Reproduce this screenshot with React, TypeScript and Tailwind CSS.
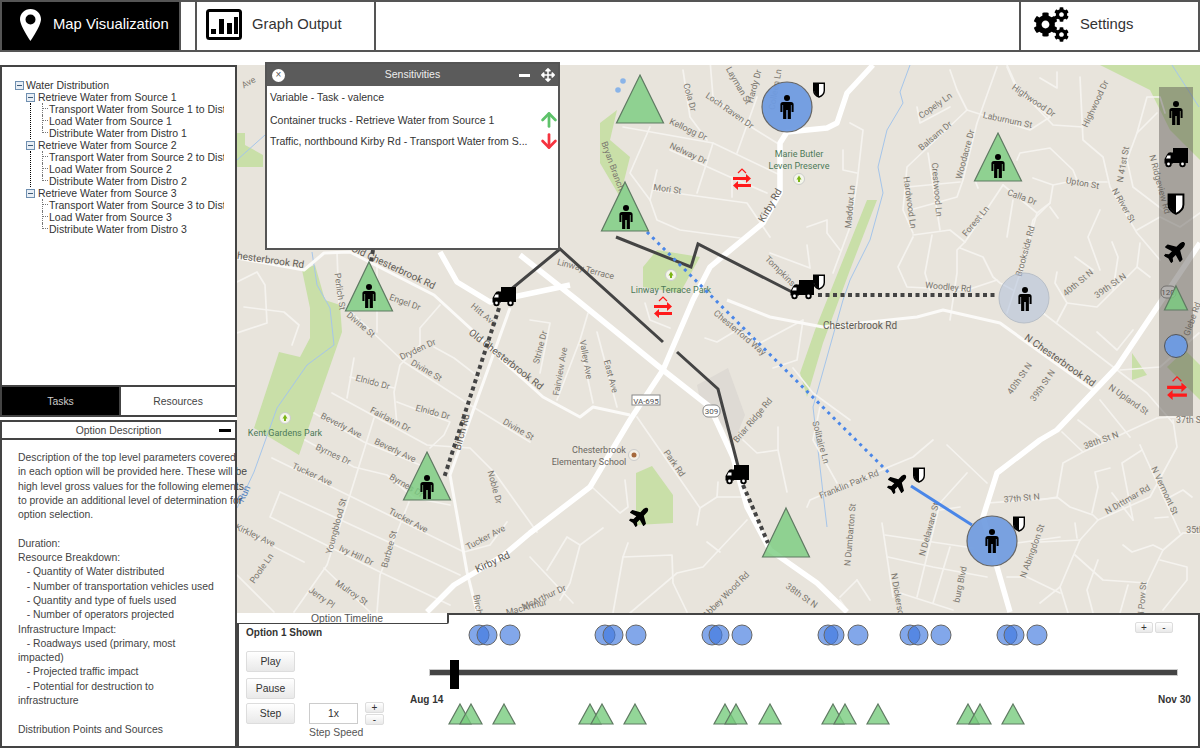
import { ArrowDown, ArrowUp } from "lucide-react";
import { FaArrowsAlt, FaCog, FaPlane } from "react-icons/fa";

// page coordinates, the map svg uses a viewBox that starts at the map's corner
const bigRoads = [
  "873,65 847,93 837,123 827,128 787,132 780,143 780,193 763,223 710,267 693,300 663,370 630,420 590,487 530,533 504,555 454,585 427,612",
  "520,255 577,300 663,370 710,407 733,457 747,507 770,550 817,583 847,612",
  "440,252 457,282 490,302 537,292 570,285",
  "1200,243 1117,367 1057,430 1040,440 997,473 983,517 997,567 1010,612",
];

const midRoads = [
  "237,258 304,270 324,253 350,252 434,295 470,328 504,362 543,397 580,417 593,407 630,415",
  "510,308 450,475 467,572 477,612",
  "727,300 770,317 823,327 917,317 943,310 1000,323 1093,390",
];

const thinRoads = [
  "347,308 404,362 470,405 530,442", "314,413 364,442 420,465", "332,393 427,445 470,448 494,472 537,532",
  "305,440 354,467 387,475 414,498 450,505", "272,458 354,498 464,552 490,545 507,522", "280,492 270,517 380,572 450,605",
  "280,492 460,575", "374,418 350,495 327,565 294,612", "409,502 380,575 377,612", "440,305 420,328 420,345 400,365 394,392 397,425",
  "434,347 454,358 480,378", "350,377 394,388", "354,358 347,398", "397,402 450,422 444,435 430,448", "244,307 284,312 299,325 292,345",
  "237,333 267,323 265,285 257,272 237,282", "237,528 304,562", "237,575 274,612", "324,568 370,612", "337,252 339,305", "377,255 377,332",
  "588,313 580,340 557,400", "580,343 593,403", "597,332 617,407", "530,320 550,323 540,373", "637,417 700,508 697,525", "700,508 717,497 743,497",
  "718,482 717,497", "592,487 620,513 628,507 625,480", "530,557 573,603", "547,570 567,537 580,545 603,528", "580,545 570,583 560,600",
  "628,543 623,557 672,555 673,583 687,612", "613,613 623,557", "630,613 677,573 703,567 747,520", "707,542 720,552", "743,440 757,453 778,450 787,492",
  "778,450 778,427", "807,507 810,500 850,483 913,457 933,440", "705,338 717,342 737,330 760,343 803,320 797,360 773,368", "793,368 813,393 850,420",
  "820,407 813,440 837,483", "645,303 650,320 670,328", "623,127 713,143 780,175", "670,150 730,177 767,193", "653,190 747,203 770,237",
  "770,253 810,268 807,245", "683,70 690,117 707,140", "710,60 713,97 740,120 777,143", "757,97 737,153", "713,143 697,193", "732,177 732,197",
  "650,127 630,173 650,200", "657,170 650,200 657,220 680,230 740,238", "850,123 863,130 857,183 850,227 833,273", "807,227 827,220 827,233 840,250",
  "843,150 843,170 857,173", "950,70 957,90 967,110 1030,130 1050,117", "997,67 977,123 963,180 957,197 910,210", "967,110 907,167 903,210 913,233",
  "928,153 940,230", "907,187 960,182", "913,235 950,230 965,242 1003,185", "965,242 957,250 957,273 950,320", "960,248 983,257 993,277 1000,283 1013,290",
  "913,237 898,267 907,287 967,290 997,280", "932,235 925,273 930,290", "1003,185 1037,213 1050,203", "1013,200 1007,237", "1037,213 1020,273 1007,313",
  "1017,160 1020,153 1050,148 1073,170 1077,180 1053,185 1033,178", "917,107 920,123 950,107", "1007,67 1017,90 1050,117", "975,180 978,188",
  "1007,65 1017,87 1053,125 1083,127", "1080,77 1083,140 1103,157 1110,187 1137,233 1160,260", "1057,72 1057,88 1040,78", "1053,185 1050,203 1033,220 1020,277",
  "1050,207 1058,218", "1077,182 1107,182", "1100,210 1088,237 1100,270", "1112,242 1118,257 1113,290", "1075,257 1093,270", "1057,272 1055,283 1067,303 1057,322",
  "1067,303 1097,307 1137,267 1150,277", "1137,267 1140,243", "1043,313 1147,393 1173,423", "1097,332 1117,350 1133,330", "1120,370 1160,367 1199,333",
  "1137,133 1127,160 1133,187 1167,213", "1137,230 1160,217 1180,227 1200,213", "1157,113 1137,133 1147,97 1160,97 1165,113", "1100,400 1130,437",
  "1083,452 1157,418 1173,417 1200,420", "1062,432 1083,452 1063,463 1057,497 1040,500", "1057,497 1070,507 1093,515 1098,520 1150,497 1177,447 1173,420",
  "1098,520 1080,540 1060,587 1040,603", "1080,540 1040,542", "1075,523 1077,538", "1075,555 1103,580 1147,583 1163,550 1183,533 1200,533",
  "1140,445 1180,533", "1142,450 1122,463 1133,520", "1112,493 1133,520", "1123,545 1132,552 1153,545 1163,550", "1160,560 1187,567 1187,580 1163,610",
  "1147,583 1140,613", "1128,585 1120,613", "1098,560 1087,590 1093,613", "1060,587 1068,613", "1078,420 1100,437", "1110,468 1095,472 1098,487 1092,513",
  "1170,497 1183,490 1192,497", "1155,518 1168,517", "947,445 987,483", "940,503 917,597", "940,503 967,473", "882,523 893,597", "885,535 973,548",
  "888,557 933,567 987,577", "950,547 933,603", "900,593 953,610", "857,580 840,597", "857,580 870,600", "840,600 847,610", "1017,543 1060,537",
  "987,503 1057,498", "1007,577 1027,577 1060,593", "940,510 960,507",
];

const parks = [
  "302,270 315,265 325,300 340,305 342,332 299,455 254,428 279,352 300,357 310,338 310,308",
  "643,267 657,250 700,257 680,293 643,287",
  "636,473 652,466 673,495 673,523 636,525",
  "867,200 877,200 850,270 823,343 807,397 800,373 815,330",
  "600,123 617,110 610,140 630,157 620,197 600,163",
  "1100,65 1200,65 1200,160 1170,130 1150,90",
  "1132,353 1147,375 1132,380",
  "1167,367 1200,400 1200,365 1185,350",
  "237,133 245,133 245,145 263,155 263,167 237,167",
];

const streams = [
  "910,65 900,92 903,103 887,130 878,167 883,193 870,240 850,280 843,300 813,407 823,493 827,527",
  "312,252 317,285 330,308 334,345 307,365 277,408 254,472 237,508",
  "1172,65 1199,107",
  "237,160 265,135",
];

type Label = [string, number, number, number];

const labels: Label[] = [
  ["Perlich St", 337, 292, 82], ["Divine St", 359, 327, 40],
  ["Engel Dr", 404, 305, 20], ["Hitt Ave", 482, 317, 40], ["Dryden Dr", 419, 352, -25],
  ["Divine St", 425, 373, 30], ["Divine St", 517, 432, 30], ["Elnido Dr", 372, 385, 15], ["Elnido Dr", 432, 415, 15],
  ["Fairlawn Dr", 389, 422, 27], ["Beverly Ave", 340, 428, 27], ["Beverly Ave", 394, 453, 25], ["Byrnes Dr", 332, 457, 25],
  ["Byrnes Dr", 405, 488, 30], ["Tucker Ave", 311, 477, 25], ["Tucker Ave", 407, 523, 28], ["Tucker Ave", 487, 540, -28],
  ["Noble Dr", 492, 488, 75], ["Youngblood St", 339, 527, -75], ["Barbee St", 392, 550, -75],
  ["Ivy Hill Dr", 355, 558, 25], ["Kirkley Ave", 254, 538, 25], ["Poole Ln", 264, 570, -55], ["Mulroy St", 350, 595, 35],
  ["Jerry Pl", 320, 600, 35], ["Birch", 475, 605, 80], ["MacArthur", 527, 610, -15],
  ["Strine Dr", 543, 348, -75], ["Fairview Ave", 563, 372, -80], ["Valley Ave", 583, 360, 80], ["East Ave", 608, 377, 75],
  ["Chesterford Way", 738, 335, 40], ["Park Rd", 672, 465, 55], ["Briar Ridge Rd", 755, 422, -50], ["Solitaire Ln", 818, 443, 75],
  ["Franklin Park Rd", 850, 487, -22], ["38th St N", 800, 598, 35], ["Abbey Wood Rd", 728, 597, -45], ["McArthur Dr", 545, 600, -25],
  ["Cola Dr", 687, 98, 75], ["Layman St", 736, 87, 60], ["Hardy Dr", 757, 87, -75], ["Colleen Ln", 778, 90, -80],
  ["Loch Raven Dr", 728, 113, 35], ["Kellogg Dr", 687, 132, 25], ["Nelway Dr", 687, 156, 25], ["Bryan Branch", 610, 167, 70],
  ["Mori St", 667, 192, 8], ["Maddux Ln", 853, 207, -85], ["Tompkins", 778, 273, 45],
  ["Linway Terrace", 585, 272, 15],
  ["Copely Ln", 937, 108, -35], ["Balsam Dr", 937, 138, -40], ["Laburnum St", 1007, 123, 12], ["Highwood Dr", 1032, 103, 35],
  ["Woodacre Dr", 968, 155, -75], ["Hardwood Ln", 907, 203, 82], ["Crestwood Ln", 934, 190, 85], ["Forest Ln", 978, 223, -50],
  ["Calla Dr", 1021, 200, 20], ["Brookside Rd", 1028, 252, -75], ["Woodley Rd", 948, 290, 5], ["Highwood Dr", 1098, 105, -65],
  ["Upton St", 1082, 186, 10], ["N 41st St", 1126, 165, -80], ["N Ridgeview Rd", 1157, 185, 75], ["N River St", 1121, 207, 60],
  ["40th St N", 1080, 285, -40], ["39th St N", 1112, 288, -35], ["40th St N", 1022, 380, -55], ["39th St N", 1045, 387, -55],
  ["N Upland St", 1127, 402, 35], ["37th St", 1190, 423, 0], ["Glebe Rd", 1195, 320, -70], ["N Old", 1180, 347, -50],
  ["N Dumbarton St", 853, 535, -85], ["N Delaware St", 932, 530, -75], ["N Dickerson", 895, 597, 80], ["burg Blvd", 963, 585, -78],
  ["N Abingdon St", 1035, 552, -70], ["37th St N", 1022, 501, -5], ["38th St N", 1102, 443, -20], ["N Vermont St", 1162, 492, 65],
  ["N Dittmar Rd", 1129, 502, -30], ["35th", 1195, 533, 0], ["N Pow St", 1145, 600, -85], ["Ave", 250, 85, -30],
];

// the bigger roads get a larger, darker name
const majorLabels: Label[] = [
  ["Chesterbrook Rd", 267, 263, 8], ["Old Chesterbrook Rd", 392, 270, 25], ["Old Chesterbrook Rd", 504, 362, 38],
  ["Birch Rd", 465, 433, -75], ["Kirby Rd", 494, 565, -25], ["Kirby Rd", 773, 207, -60],
  ["Chesterbrook Rd", 860, 329, 0], ["N Chesterbrook Rd", 1058, 363, 35],
];

const parkLabels: [string, number, number][] = [
  ["Kent Gardens Park", 285, 436],
  ["Marie Butler", 799, 157],
  ["Leven Preserve", 799, 169],
  ["Linway Terrace Park", 671, 293],
];

const timelineCircles = [479, 487, 510, 605, 613, 636, 712, 719, 742, 828, 834, 858, 910, 918, 941, 1007, 1014, 1037];
const timelineTriangles = [460, 471, 504, 590, 602, 635, 725, 736, 770, 833, 845, 878, 968, 980, 1013];

const treeData = [
  { name: "Retrieve Water from Source 1", items: ["Transport Water from Source 1 to Distro 1", "Load Water from Source 1", "Distribute Water from Distro 1"] },
  { name: "Retrieve Water from Source 2", items: ["Transport Water from Source 2 to Distro 2", "Load Water from Source 2", "Distribute Water from Distro 2"] },
  { name: "Retrieve Water from Source 3", items: ["Transport Water from Source 3 to Distro 3", "Load Water from Source 3", "Distribute Water from Distro 3"] },
];

const descriptionLines = [
  "Description of the top level parameters covered",
  "in each option will be provided here. These will be",
  "high level gross values for the following elements",
  "to provide an additional level of determination for",
  "option selection.",
  "",
  "Duration:",
  "Resource Breakdown:",
  "   - Quantity of Water distributed",
  "   - Number of transportation vehicles used",
  "   - Quantity and type of fuels used",
  "   - Number of operators projected",
  "Infrastructure Impact:",
  "   - Roadways used (primary, most",
  "impacted)",
  "   - Projected traffic impact",
  "   - Potential for destruction to",
  "infrastructure",
  "",
  "Distribution Points and Sources",
];

// marker glyphs, drawn around 0,0 so they can be moved with a translate
const Person = ({ x, y }: { x: number; y: number }) => (
  <g transform={`translate(${x - 7} ${y - 12})`} fill="#000">
    <circle cx="7" cy="3" r="3" />
    <path d="M3 7h8a2.6 2.6 0 0 1 2.6 2.6V17h-2v-7h-.7v14H7.7v-9H6.3v9H3.1V10h-.7v7h-2V9.6A2.6 2.6 0 0 1 3 7z" />
  </g>
);

const Truck = ({ x, y, s = 1 }: { x: number; y: number; s?: number }) => (
  <g transform={`translate(${x} ${y}) scale(${s}) translate(-12 -10)`}>
    <path d="M9 0h15v15H9z" fill="#000" />
    <path d="M7.5 4.5H9v11H0.5V11L3 6.5A4 4 0 0 1 7.5 4.5z" fill="#000" />
    <path d="M3.5 7.5h3v3h-4.5z" fill="#fff" />
    <circle cx="4.5" cy="16" r="3.2" fill="#000" />
    <circle cx="4.5" cy="16" r="1.4" fill="#fff" />
    <circle cx="18.5" cy="16" r="3.2" fill="#000" />
    <circle cx="18.5" cy="16" r="1.4" fill="#fff" />
  </g>
);

const Shield = ({ x, y, s = 1 }: { x: number; y: number; s?: number }) => (
  <g transform={`translate(${x} ${y}) scale(${s}) translate(-6 -7.5)`}>
    <path d="M0.7 0.7h10.6v7.2C11.3 11 8.6 13.4 6 14.5C3.4 13.4 0.7 11 0.7 7.9z" fill="#fff" stroke="#000" strokeWidth="1.4" />
    <path d="M1 1h5v13.2C3.5 13 1 10.8 1 7.9z" fill="#000" />
  </g>
);

const Plane = ({ x, y, size = 22 }: { x: number; y: number; size?: number }) => (
  <g transform={`translate(${x} ${y}) rotate(-45) translate(${-size / 2} ${-size / 2})`}>
    <FaPlane size={size} color="#000" />
  </g>
);

const RedArrows = ({ x, y, s = 1 }: { x: number; y: number; s?: number }) => (
  <g transform={`translate(${x} ${y}) scale(${s}) translate(-9 -11)`} fill="#ff1a1a">
    <path d="M5 4l4-4 4 4" fill="none" stroke="#ff1a1a" strokeWidth="1.200" />
    <path d="M0 8h13V5l5 4.500-5 4.500v-3H0z" />
    <path d="M18 15H5v-3l-5 4.500 5 4.500v-3h13z" />
  </g>
);

const Triangle = ({ x, y, w = 47, h = 48 }: { x: number; y: number; w?: number; h?: number }) => (
  <path d={`M${x} ${y}L${x + w / 2} ${y + h}H${x - w / 2}Z`} fill="#78cc7e" fillOpacity="0.8" stroke="#5f7a62" strokeWidth="1.2" />
);

const TreeIcon = ({ x, y }: { x: number; y: number }) => (
  <g>
    <circle cx={x} cy={y} r="5.500" fill="#f4f6ea" stroke="#ccc" />
    <path d={`M${x} ${y - 3.500}l2.500 4h-1.500v2.500h-2v-2.500h-1.500z`} fill="#7cb518" />
  </g>
);

const MapView = () => (
  <svg viewBox="237 65 963 548" className="block h-full w-full bg-[#e8e4dc]">
    {parks.map((p) => (
      <polygon key={p} points={p} fill="#c9dfa8" />
    ))}
    <polygon points="697,385 728,368 745,415 735,440 700,400" fill="#dedad4" />
    <circle cx="618" cy="90" r="2.800" fill="#8ab4e8" />
    <circle cx="623" cy="81" r="2.800" fill="#8ab4e8" />
    {streams.map((p) => (
      <polyline key={p} points={p} fill="none" stroke="#a5c5ea" strokeWidth="1" />
    ))}
    {thinRoads.map((p) => (
      <polyline key={p} points={p} fill="none" stroke="#f5f3ef" strokeWidth="1.700" strokeLinejoin="round" strokeLinecap="round" />
    ))}
    {midRoads.map((p) => (
      <polyline key={p} points={p} fill="none" stroke="#fbfaf8" strokeWidth="3" strokeLinejoin="round" />
    ))}
    {bigRoads.map((p) => (
      <polyline key={p} points={p} fill="none" stroke="#fff" strokeWidth="5.500" strokeLinejoin="round" />
    ))}

    <g fontFamily="Roboto, sans-serif" fontSize="8.800" fill="#7b776f" textAnchor="middle">
      {labels.map(([t, x, y, a]) => (
        <text key={`${t}${x}`} x={x} y={y} transform={`rotate(${a} ${x} ${y})`}>
          {t}
        </text>
      ))}
    </g>
    <g fontFamily="Roboto, sans-serif" fontSize="10" fill="#5f5b54" textAnchor="middle">
      {majorLabels.map(([t, x, y, a]) => (
        <text key={`${t}${x}`} x={x} y={y} transform={`rotate(${a} ${x} ${y})`}>
          {t}
        </text>
      ))}
    </g>
    <g fontFamily="Roboto, sans-serif" fontSize="9" fill="#4d7a58" textAnchor="middle">
      {parkLabels.map(([t, x, y]) => (
        <text key={t} x={x} y={y}>
          {t}
        </text>
      ))}
    </g>
    <text x="247" y="495" transform="rotate(-65 247 495)" fontFamily="Roboto, sans-serif" fontSize="10" fill="#5b87c0" textAnchor="middle">
      Run
    </text>
    <g fontFamily="Roboto, sans-serif" fontSize="9" fill="#6a665f" textAnchor="middle">
      <text x="599" y="453">Chesterbrook</text>
      <text x="589" y="465">Elementary School</text>
    </g>
    <TreeIcon x={285} y={418} />
    <TreeIcon x={799} y={179} />
    <TreeIcon x={671} y={275} />
    <circle cx="634" cy="455" r="5.500" fill="#f3efe6" stroke="#ccc" />
    <circle cx="634" cy="455" r="2.500" fill="#a5683c" />

    <rect x="632" y="395" width="28" height="10" fill="#fff" stroke="#888" />
    <text x="646" y="403.500" fontFamily="Roboto, sans-serif" fontSize="8" fill="#555" textAnchor="middle">VA-695</text>
    <rect x="703" y="405" width="17" height="12" rx="5" fill="#fff" stroke="#888" />
    <text x="711.500" y="414" fontFamily="Roboto, sans-serif" fontSize="8" fill="#555" textAnchor="middle">309</text>
    <rect x="1161" y="286" width="15" height="12" rx="5" fill="#fff" stroke="#888" />
    <text x="1168" y="295" fontFamily="Roboto, sans-serif" fontSize="8" fill="#555" textAnchor="middle">120</text>

    {/* links between markers */}
    <g fill="none" stroke="#444" strokeWidth="3">
      <polyline points="504,295 560,249 663,342" />
      <polyline points="677,352 718,389 738,466" />
      <polyline points="616,237 691,267 698,244 792,292" />
    </g>
    <g fill="none" stroke="#444" strokeWidth="4" strokeDasharray="4 3.500">
      <line x1="373" y1="250" x2="371" y2="262" />
      <line x1="499" y1="308" x2="444" y2="478" />
      <line x1="818" y1="295" x2="998" y2="295" />
      <line x1="743" y1="485" x2="768" y2="543" />
    </g>
    <line x1="647" y1="232" x2="890" y2="474" stroke="#4a86e8" strokeWidth="3" strokeDasharray="3 4.500" />
    <line x1="911" y1="486" x2="972" y2="525" stroke="#4a86e8" strokeWidth="3" />

    <Triangle x={640} y={75} />
    <Triangle x={625} y={182} h={49} />
    <Triangle x={998} y={133} />
    <Triangle x={369} y={262} h={49} />
    <Triangle x={427} y={452} />
    <Triangle x={786} y={508} h={49} />
    <circle cx="787" cy="107" r="25" fill="#6f9be0" fillOpacity="0.95" stroke="#666" strokeWidth="1.200" />
    <circle cx="1024" cy="298" r="25" fill="#aec0da" fillOpacity="0.55" stroke="#b8bfc8" />
    <circle cx="992" cy="541" r="25" fill="#6f9be0" fillOpacity="0.92" stroke="#666" strokeWidth="1.200" />

    <Person x={626} y={217} />
    <Person x={787} y={107} />
    <Person x={998} y={166} />
    <Person x={369} y={296} />
    <Person x={427} y={487} />
    <Person x={1025} y={299} />
    <Person x={992} y={541} />

    <Truck x={504} y={297} />
    <Truck x={802} y={290} />
    <Truck x={737} y={475} />
    <Shield x={819} y={90} />
    <Shield x={819} y={282} />
    <Shield x={919} y={475} />
    <Shield x={1019} y={524} />
    <Plane x={898} y={483} />
    <Plane x={640} y={516} />
    <RedArrows x={742} y={180} />
    <RedArrows x={663} y={308} />
  </svg>
);

// palette of things you can drop on the map
const Palette = () => (
  <div className="absolute left-[922px] top-[22px] h-[329px] w-[34px] bg-[#57534e]/45">
    <svg viewBox="1159 87 34 329" className="block h-full w-full">
      <Person x={1176} y={113} />
      <Truck x={1176} y={158} />
      <Shield x={1176} y={204} s={1.400} />
      <Plane x={1176} y={251} size={24} />
      <Triangle x={1176} y={286} w={23} h={24} />
      <circle cx="1176" cy="346" r="11.500" fill="#6f9be0" stroke="#555" />
      <RedArrows x={1177} y={389} s={1.100} />
    </svg>
  </div>
);

const Sensitivities = () => (
  <div className="absolute left-[28px] top-[-3px] z-20 h-[188px] w-[295px] border-2 border-[#555] bg-white">
    <div className="flex h-[22px] items-center justify-between bg-[#5b5b5b] pl-[5px] pr-[2px] text-[10.500px] text-[#eee]">
      <span className="flex h-[13px] w-[13px] items-center justify-center rounded-full bg-white text-[10px] leading-none text-[#555]">×</span>
      <span className="ml-[21px]">Sensitivities</span>
      <span className="flex items-center gap-[11px] pr-[1px]">
        <span className="h-[3px] w-[11px] bg-white" />
        <FaArrowsAlt className="text-[14px] text-white" />
      </span>
    </div>
    <div className="relative px-[3px] pt-[4px] text-[10.500px] text-[#333]">
      <p className="leading-[14px]">Variable - Task - valence</p>
      <div className="mt-[9px] flex h-[14px] items-center justify-between whitespace-nowrap leading-[14px]">
        <span>Container trucks - Retrieve Water from Source 1</span>
        <ArrowUp size={22} strokeWidth={3} className="mr-[-5px] text-[#5ec26a]" />
      </div>
      <div className="mt-[7px] flex h-[14px] items-center justify-between whitespace-nowrap leading-[14px]">
        <span>Traffic, northbound Kirby Rd - Transport Water from S...</span>
        <ArrowDown size={22} strokeWidth={3} className="mr-[-5px] text-[#f5333f]" />
      </div>
    </div>
  </div>
);

const MinusBox = () => (
  <span className="relative z-10 flex h-[9px] w-[9px] shrink-0 items-center justify-center border border-[#6f8fb0] bg-[#e8eef5]">
    <span className="h-px w-[5px] bg-[#3c5a78]" />
  </span>
);

const Tree = () => (
  <div className="h-[322px] border-2 border-[#444] bg-white pl-[13px] pt-[12px] text-[10.500px] leading-[12px] text-[#333]">
    <div className="w-[209px] overflow-hidden">
      <div className="flex h-[12px] items-center gap-[2px] whitespace-nowrap">
        <MinusBox />
        <span>Water Distribution</span>
      </div>
      {treeData.map((group, i) => (
        <div key={group.name} className="pl-[11px]">
          <div className="flex h-[12px] items-center gap-[3px] whitespace-nowrap">
            <MinusBox />
            <span>{group.name}</span>
          </div>
          <div className={i < 2 ? "ml-[4px] border-l border-dotted border-black" : "ml-[5px]"}>
            {group.items.map((item, j) => (
              <div key={item} className="ml-[11px] flex h-[12px] items-center whitespace-nowrap">
                <span className={j === 2 ? "h-[6px] w-[6px] shrink-0 -translate-y-[3px] border-b border-l border-dotted border-[#777]" : "h-[12px] w-[6px] shrink-0 border-l border-dotted border-[#777] pt-[5px]"}>
                  {j !== 2 && <span className="block border-t border-dotted border-[#777]" />}
                </span>
                <span className="ml-px">{item}</span>
              </div>
            ))}
          </div>
        </div>
      ))}
    </div>
  </div>
);

const SmallButton = ({ label, className }: { label: string; className: string }) => (
  <button className={`flex items-center justify-center rounded-[2px] border border-[#ddd] bg-gradient-to-b from-white to-[#e9e9e9] text-[#333] ${className}`}>
    {label}
  </button>
);

const Timeline = () => (
  <div className="relative flex h-[135px] border-2 border-[#444] bg-white text-[10.400px] text-[#333]">
    {/* the tab hangs over the top edge */}
    <div className="absolute left-[-2px] top-[-2px] z-10 flex h-[11px] w-[212px] justify-center overflow-hidden rounded-br-[2px] border-b border-r-2 border-[#444] bg-white pl-[10px] leading-[12px] text-[#555]">
      Option Timeline
    </div>
    <div className="w-[169px] shrink-0 pl-[7px] pt-[11px]">
      <p className="text-[10px] font-bold leading-[13px]">Option 1 Shown</p>
      <div className="mt-[12px] flex flex-col">
        <SmallButton label="Play" className="h-[21px] w-[49px]" />
        <SmallButton label="Pause" className="mt-[6px] h-[21px] w-[49px]" />
        <div className="mt-[4px] flex items-start">
          <SmallButton label="Step" className="h-[21px] w-[49px]" />
          <div className="ml-[14px] w-[49px]">
            <div className="flex h-[21px] w-[49px] items-center justify-center border border-[#ccc] text-[#333]">1x</div>
            <p className="mt-px whitespace-nowrap text-[#555]">Step Speed</p>
          </div>
          <div className="ml-[7px] -mt-px flex flex-col gap-px">
            <SmallButton label="+" className="h-[11px] w-[19px] text-[10px] leading-none" />
            <SmallButton label="-" className="h-[11px] w-[19px] text-[10px] leading-none" />
          </div>
        </div>
      </div>
    </div>
    <div className="relative flex-1">
      <svg viewBox="408 615 790 131" className="absolute inset-0 h-full w-full">
        {timelineCircles.map((x) => (
          <circle key={x} cx={x} cy="635" r="10" fill="#3f78de" fillOpacity="0.65" stroke="#666" strokeWidth="1" />
        ))}
        {timelineTriangles.map((x) => (
          <Triangle key={x} x={x} y={704} w={22} h={20} />
        ))}
      </svg>
      <div className="absolute left-[21px] top-[54px] h-[7px] w-[749px] border border-[#ccc] bg-[#444]" />
      <div className="absolute left-[42px] top-[45px] h-[29px] w-[9px] bg-black" />
      <span className="absolute left-[2px] top-[77px] text-[10px] font-bold">Aug 14</span>
      <span className="absolute left-[750px] top-[77px] whitespace-nowrap text-[10px] font-bold">Nov 30</span>
      <div className="absolute left-[727px] top-[7px] flex gap-[2px]">
        <SmallButton label="+" className="h-[11px] w-[18px] text-[10px] leading-none" />
        <SmallButton label="-" className="h-[11px] w-[18px] text-[10px] leading-none" />
      </div>
    </div>
  </div>
);

const App = () => {
  return (
    <div className="h-[749px] w-[1200px] overflow-hidden bg-white font-['Liberation_Sans',Arial,sans-serif]">
      {/* top menu */}
      <div className="flex h-[52px] border-2 border-[#555] bg-white text-[14.800px] text-[#333]">
        <div className="flex w-[179px] items-center gap-[12px] border-r-2 border-[#555] bg-black pb-[3px] pl-[18px] text-white">
          <svg viewBox="0 0 21 32" className="h-[32px] w-[21px]">
            <path
              fillRule="evenodd"
              fill="#fff"
              d="M10.500 0C4.700 0 0 4.600 0 10.300 0 17 10.500 32 10.500 32S21 17 21 10.300C21 4.600 16.300 0 10.500 0zM10.500 5.500a5 5 0 1 1 0 10 5 5 0 0 1 0-10z"
            />
          </svg>
          <span>Map Visualization</span>
        </div>
        <div className="ml-[14px] flex w-[181px] items-center gap-[10px] border-x-2 border-[#555] pb-[3px] pl-[9px]">
          <svg viewBox="0 0 36 31" className="h-[31px] w-[36px]">
            <rect x="1.500" y="1.500" width="33" height="28" rx="2" fill="#fff" stroke="#000" strokeWidth="3" />
            <path d="M5 25v-5h5v5zM13 25V10h5v15zM21 25v-11h5v11zM28 25V8h4v17z" fill="#000" />
          </svg>
          <span>Graph Output</span>
        </div>
        <div className="ml-auto flex w-[179px] items-center gap-[11px] border-l-2 border-[#555] pb-[3px] pl-[12px]">
          <svg viewBox="0 0 36 35" className="h-[35px] w-[36px] text-black">
            <FaCog x="0" y="5" size={25} />
            <FaCog x="21" y="0" size={15} />
            <FaCog x="21" y="20" size={15} />
          </svg>
          <span>Settings</span>
        </div>
      </div>

      <div className="mt-[13px] flex h-[684px]">
        <div className="relative z-10 flex w-[237px] shrink-0 flex-col">
          <Tree />
          <div className="flex h-[30px] border-2 border-t-0 border-[#444] text-[10.400px]">
            <div className="flex w-[117px] items-center justify-center bg-black pt-[2px] text-[#ccc]">Tasks</div>
            <div className="flex flex-1 items-center justify-center border-l-2 border-[#444] bg-white pt-[2px] text-[#444]">Resources</div>
          </div>
          <div className="mt-[3px] flex h-[20px] items-center justify-center border-2 border-[#444] bg-white pt-px text-[10.400px] text-[#444]">
            <span>Option Description</span>
            <span className="absolute right-[6px] h-[3px] w-[12px] bg-black" />
          </div>
          <div className="mb-[1px] flex-1 border-x-2 border-b-2 border-t-0 border-[#444] bg-white pl-[16px] pt-[11px] text-[10.400px] leading-[14.300px] text-[#444]">
            {descriptionLines.map((line, i) => (
              <p key={i} className="h-[14.300px] whitespace-pre">
                {line}
              </p>
            ))}
          </div>
        </div>

        <div className="relative flex flex-1 flex-col">
          <div className="h-[548px] overflow-hidden">
            <MapView />
          </div>
          <Sensitivities />
          <Palette />
          <Timeline />
        </div>
      </div>
    </div>
  );
};

export default App;
